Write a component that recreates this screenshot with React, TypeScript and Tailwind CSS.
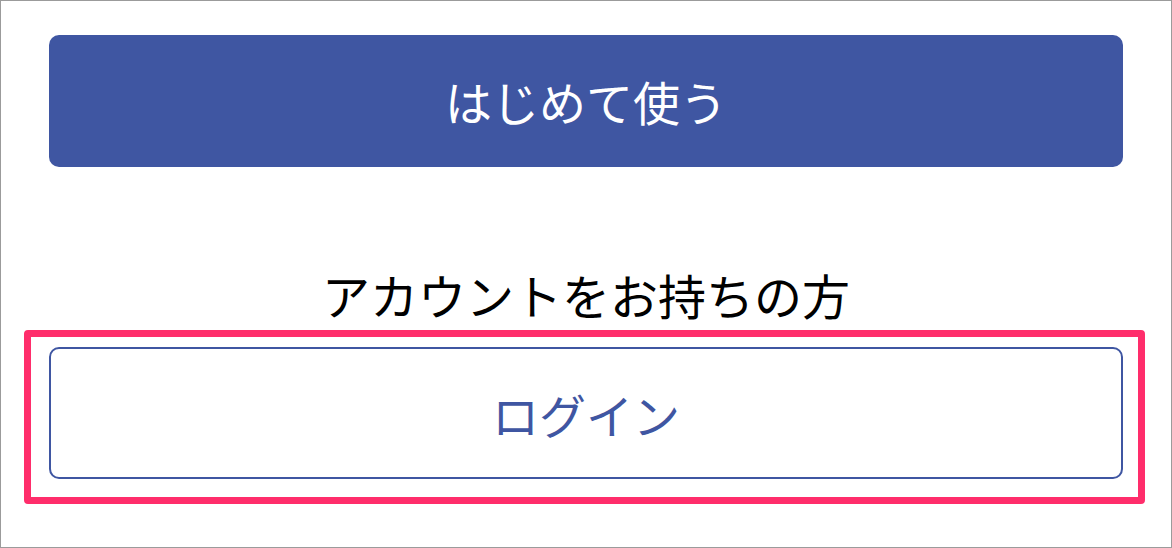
import React from "react";

export default function App() {
  return (
    <div
      className="relative w-[1172px] h-[548px] border border-[#9b9b9b] bg-white box-border"
      style={{ fontFamily: '"Noto Sans CJK JP", "Noto Sans", sans-serif' }}
    >
      <div className="flex flex-col pl-[48px] pr-[48px] pt-[34px]">
        <button className="h-[132px] w-full rounded-[10px] bg-[#3f56a2] text-white text-[47px] leading-none flex items-center justify-center pb-[2px]">
          はじめて使う
        </button>
        <div className="mt-[97px] h-[62px] leading-[60px] text-center text-[48px] text-black">
          アカウントをお持ちの方
        </div>
        <button className="mt-[21px] h-[132px] w-full rounded-[10px] border-2 border-[#3f56a2] bg-white text-[#3f56a2] text-[47px] leading-none flex items-center justify-center">
          ログイン
        </button>
      </div>
      <div className="absolute left-[23px] top-[329px] w-[1121px] h-[174px] border-[7px] border-[#ff2d6b] rounded-[4px] pointer-events-none" />
    </div>
  );
}
